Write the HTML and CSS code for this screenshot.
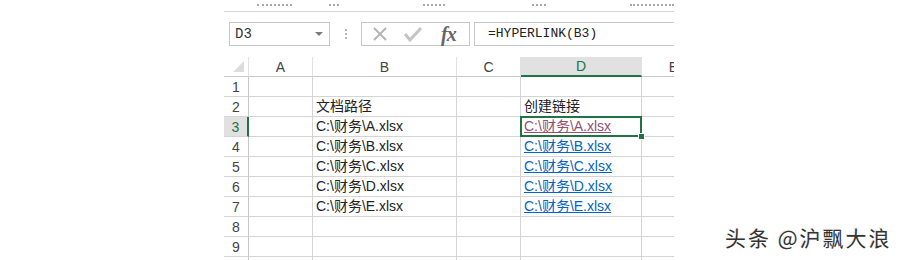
FILE: index.html
```html
<!DOCTYPE html>
<html lang="zh-CN">
<head>
    <meta charset="UTF-8">
    <title>HYPERLINK</title>
    <link rel="stylesheet" href="styles.css">
</head>
<body>
    <div class="page">
        <div class="sheet">
            <!-- bottom edge of the ribbon group labels, cut off by the crop -->
            <div class="ribbon">
                <span class="rb rb-1"></span>
                <span class="rb rb-2"></span>
                <span class="rb rb-3"></span>
                <span class="rb rb-4"></span>
                <span class="rb rb-5"></span>
            </div>

            <div class="formula-bar">
                <div class="name-box">
                    <span>D3</span>
                    <span class="arrow"></span>
                </div>
                <div class="grip"><i></i><i></i><i></i></div>
                <div class="fx-box">
                    <svg class="ico" width="18" height="18" viewBox="0 0 18 18">
                        <path d="M3 3 L15 15 M15 3 L3 15" stroke="#b4b4b4" stroke-width="2" fill="none"/>
                    </svg>
                    <svg class="ico" width="20" height="18" viewBox="0 0 20 18">
                        <path d="M2 9 L7 15 L18 3" stroke="#c4c4c4" stroke-width="3" fill="none"/>
                    </svg>
                    <span class="fx">fx</span>
                </div>
                <div class="formula">=HYPERLINK(B3)</div>
            </div>

            <div class="grid">
                <div class="hd corner"><span class="tri"></span></div>
                <div class="hd">A</div>
                <div class="hd">B</div>
                <div class="hd">C</div>
                <div class="hd hd-sel">D</div>
                <div class="hd">E</div>

                <div class="rh">1</div><div></div><div></div><div></div><div></div><div></div>

                <div class="rh">2</div><div></div>
                <div class="txt">文档路径</div><div></div>
                <div class="txt">创建链接</div><div></div>

                <div class="rh rh-sel">3</div><div></div>
                <div class="txt">C:\财务\A.xlsx</div><div></div>
                <div class="txt sel"><a class="visited">C:\财务\A.xlsx</a></div><div></div>

                <div class="rh">4</div><div></div>
                <div class="txt">C:\财务\B.xlsx</div><div></div>
                <div class="txt"><a>C:\财务\B.xlsx</a></div><div></div>

                <div class="rh">5</div><div></div>
                <div class="txt">C:\财务\C.xlsx</div><div></div>
                <div class="txt"><a>C:\财务\C.xlsx</a></div><div></div>

                <div class="rh">6</div><div></div>
                <div class="txt">C:\财务\D.xlsx</div><div></div>
                <div class="txt"><a>C:\财务\D.xlsx</a></div><div></div>

                <div class="rh">7</div><div></div>
                <div class="txt">C:\财务\E.xlsx</div><div></div>
                <div class="txt"><a>C:\财务\E.xlsx</a></div><div></div>

                <div class="rh">8</div><div></div><div></div><div></div><div></div><div></div>
                <div class="rh">9</div><div></div><div></div><div></div><div></div><div></div>
                <div class="rh"></div><div></div><div></div><div></div><div></div><div></div>
            </div>
        </div>

        <div class="watermark">头条 @沪飘大浪</div>
    </div>
</body>
</html>
```

FILE: styles.css
```css
body {
    margin: 0;
    background: #fff;
    font-family: "Liberation Sans", "Noto Sans CJK SC", sans-serif;
    color: #222;
    height: 260px;
    overflow: hidden;
}
.page {
    display: flex;
    height: 260px;
}
.sheet {
    margin-left: 224px;
    width: 450px;
    height: 260px;
    overflow: hidden;
    flex-shrink: 0;
}

/* ribbon remnants at the top */
.ribbon {
    height: 11px;
    border-bottom: 1px solid #d6d6d6;
    display: flex;
    align-items: flex-start;
}
.rb {
    margin-top: 4px;
    height: 0;
    border-top: 2px dotted #a8a8a8;
}
.rb-1 { margin-left: 33px; width: 36px; }
.rb-2 { margin-left: 37px; width: 10px; }
.rb-3 { margin-left: 84px; width: 22px; }
.rb-4 { margin-left: 87px; width: 14px; }
.rb-5 { margin-left: 84px; width: 45px; }

/* formula bar */
.formula-bar {
    display: flex;
    align-items: center;
    height: 24px;
    margin: 10px 0 11px;
}
.name-box {
    margin-left: 5px;
    width: 101px;
    height: 24px;
    box-sizing: border-box;
    border: 1px solid #c6c6c6;
    display: flex;
    align-items: center;
    justify-content: space-between;
    padding: 0 6px 0 5px;
    font-family: "Liberation Mono", monospace;
    font-size: 14px;
    color: #333;
}
.arrow {
    width: 0;
    height: 0;
    border-left: 4px solid transparent;
    border-right: 4px solid transparent;
    border-top: 4px solid #7a7a7a;
}
.grip {
    width: 31px;
    display: flex;
    flex-direction: column;
    align-items: center;
    gap: 2px;
}
.grip i {
    width: 2px;
    height: 2px;
    background: #b8b8b8;
}
.fx-box {
    width: 109px;
    height: 24px;
    box-sizing: border-box;
    border: 1px solid #c6c6c6;
    display: flex;
    align-items: center;
    padding-left: 9px;
}
.ico { margin-right: 14px; }
.ico + .ico { margin-right: 18px; }
.fx {
    font-family: "Liberation Serif", serif;
    font-style: italic;
    font-weight: bold;
    font-size: 20px;
    color: #666;
    letter-spacing: -1px;
}
.formula {
    margin-left: 4px;
    flex: 1;
    height: 24px;
    box-sizing: border-box;
    border: 1px solid #c6c6c6;
    border-right: none;
    padding-left: 13px;
    font-family: "Liberation Mono", monospace;
    font-size: 13px;
    line-height: 22px;
    color: #222;
}

/* worksheet grid */
.grid {
    display: grid;
    grid-template-columns: 25px 64px 144px 64px 121px 64px;
    grid-auto-rows: 20px;
}
.grid > div {
    box-sizing: border-box;
    border-right: 1px solid #d4d4d4;
    border-bottom: 1px solid #d4d4d4;
}
.hd {
    display: flex;
    align-items: center;
    justify-content: center;
    font-size: 14px;
    color: #444;
    border-right-color: #e2e2e2 !important;
    border-bottom-color: #c8c8c8 !important;
}
.corner {
    position: relative;
}
.tri {
    position: absolute;
    right: 4px;
    bottom: 4px;
    width: 0;
    height: 0;
    border-left: 11px solid transparent;
    border-bottom: 11px solid #dcdcdc;
}
.hd-sel {
    background: #e1e1e1;
    color: #217346;
    border-bottom: 2px solid #217346 !important;
}
.rh {
    display: flex;
    align-items: center;
    justify-content: center;
    font-size: 14px;
    color: #444;
    border-right-color: #c8c8c8 !important;
}
.rh-sel {
    background: #e1e1e1;
    color: #217346;
    border-right: 2px solid #217346 !important;
}
.txt {
    font-size: 14px;
    line-height: 19px;
    padding-left: 3px;
    white-space: nowrap;
}
.txt a {
    color: #0563c1;
    text-decoration: underline;
}
.txt a.visited {
    color: #954f72;
}
.sel {
    position: relative;
}
.sel::after {
    content: "";
    position: absolute;
    left: -1px;
    top: -1px;
    right: -1px;
    bottom: -1px;
    border: 2px solid #217346;
}
.sel::before {
    content: "";
    position: absolute;
    right: -4px;
    bottom: -4px;
    width: 5px;
    height: 5px;
    background: #217346;
    border: 1px solid #fff;
    z-index: 1;
}

/* watermark */
.watermark {
    align-self: flex-end;
    margin: 0 0 12px 51px;
    font-family: "Noto Sans CJK SC", sans-serif;
    font-size: 21px;
    line-height: 22px;
    color: #333;
    letter-spacing: 2px;
    white-space: nowrap;
    text-shadow: 1px 1px 0 #fff, -1px -1px 0 #eee;
}
```
